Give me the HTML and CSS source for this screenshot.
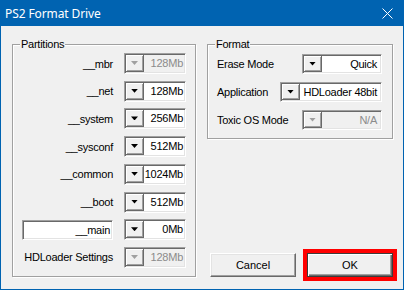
FILE: index.html
```html
<!DOCTYPE html>
<html lang="en">
<head>
    <meta charset="UTF-8">
    <title>PS2 Format Drive</title>
    <link rel="stylesheet" href="styles.css">
</head>
<body>
    <div class="window">
        <div class="titlebar">
            <span class="title">PS2 Format Drive</span>
            <svg class="close" width="11" height="11" viewBox="0 0 11 11">
                <path d="M0.5 0.5 L10.5 10.5 M10.5 0.5 L0.5 10.5" stroke="#fff" stroke-width="1" fill="none"/>
            </svg>
        </div>
        <div class="client">
            <!-- Partitions -->
            <fieldset class="group partitions">
                <legend>Partitions</legend>
                <div class="part-rows">
                    <div class="prow">
                        <span class="plabel">__mbr</span>
                        <div class="combo disabled"><span class="combo-btn"></span><span class="combo-value">128Mb</span></div>
                    </div>
                    <div class="prow">
                        <span class="plabel">__net</span>
                        <div class="combo"><span class="combo-btn"></span><span class="combo-value">128Mb</span></div>
                    </div>
                    <div class="prow">
                        <span class="plabel">__system</span>
                        <div class="combo"><span class="combo-btn"></span><span class="combo-value">256Mb</span></div>
                    </div>
                    <div class="prow">
                        <span class="plabel">__sysconf</span>
                        <div class="combo"><span class="combo-btn"></span><span class="combo-value">512Mb</span></div>
                    </div>
                    <div class="prow">
                        <span class="plabel">__common</span>
                        <div class="combo"><span class="combo-btn"></span><span class="combo-value">1024Mb</span></div>
                    </div>
                    <div class="prow">
                        <span class="plabel">__boot</span>
                        <div class="combo"><span class="combo-btn"></span><span class="combo-value">512Mb</span></div>
                    </div>
                    <div class="prow">
                        <div class="field">__main</div>
                        <div class="combo"><span class="combo-btn"></span><span class="combo-value">0Mb</span></div>
                    </div>
                    <div class="prow">
                        <span class="plabel">HDLoader Settings</span>
                        <div class="combo disabled"><span class="combo-btn"></span><span class="combo-value">128Mb</span></div>
                    </div>
                </div>
            </fieldset>

            <div class="side">
                <!-- Format -->
                <fieldset class="group format">
                    <legend>Format</legend>
                    <div class="format-rows">
                        <div class="frow">
                            <span>Erase Mode</span>
                            <div class="combo combo-short"><span class="combo-btn"></span><span class="combo-value">Quick</span></div>
                        </div>
                        <div class="frow">
                            <span>Application</span>
                            <div class="combo combo-long"><span class="combo-btn"></span><span class="combo-value">HDLoader 48bit</span></div>
                        </div>
                        <div class="frow">
                            <span>Toxic OS Mode</span>
                            <div class="combo combo-short disabled"><span class="combo-btn"></span><span class="combo-value">N/A</span></div>
                        </div>
                    </div>
                </fieldset>

                <div class="buttons">
                    <button class="btn">Cancel</button>
                    <button class="btn btn-default">OK</button>
                </div>
            </div>
        </div>
    </div>
</body>
</html>
```

FILE: styles.css
```css
body {
    margin: 0;
    font-family: "Liberation Sans", Arial, sans-serif;
    font-size: 11px;
    letter-spacing: -0.25px;
    color: #000;
}

.window {
    width: 404px;
    height: 290px;
    box-sizing: border-box;
    background: #0063b1;
    padding: 0 1px 1px;
    display: flex;
    flex-direction: column;
}

.titlebar {
    height: 26px;
    display: flex;
    align-items: center;
    justify-content: space-between;
    padding: 0 10px 0 4px;
    color: #fff;
    font-family: "Noto Sans", sans-serif;
    font-size: 12px;
    letter-spacing: -0.1px;
}

.client {
    flex: 1;
    display: flex;
    gap: 11px;
    padding: 12px 10px 12px 11px;
    background: #f0f0f0;
}

/* group box, etched line */
.group {
    margin: 0;
    min-width: 0;
    border: 1px solid #a0a0a0;
    box-shadow: inset 1px 1px #fff, 1px 1px #fff;
}

.group legend {
    margin-left: -2px;
    padding: 0 1px;
    line-height: 13px;
    background: #f0f0f0;
}

.partitions {
    width: 184px;
    box-sizing: border-box;
    padding: 2px 9px 8px;
}

.part-rows {
    height: 215px;
    display: flex;
    flex-direction: column;
    justify-content: space-between;
}

.prow {
    display: flex;
    align-items: center;
    gap: 11px;
    height: 21px;
}

.plabel {
    width: 91px;
    text-align: right;
    white-space: nowrap;
}

.field {
    width: 91px;
    height: 20px;
    box-sizing: border-box;
    border: 1px solid;
    border-color: #a0a0a0 #fff #fff #a0a0a0;
    box-shadow: inset 1px 1px #696969, inset -1px -1px #e3e3e3;
    background: #fff;
    text-align: right;
    padding-right: 2px;
    line-height: 18px;
}

/* combobox: button on the left, value on the right */
.combo {
    width: 62px;
    height: 21px;
    box-sizing: border-box;
    display: flex;
    padding: 1px;
    border: 1px solid;
    border-color: #a0a0a0 #fff #fff #a0a0a0;
    box-shadow: inset 1px 1px #696969, inset -1px -1px #e3e3e3;
    background: #fff;
}

.combo-btn {
    width: 17px;
    display: flex;
    align-items: center;
    justify-content: center;
    background: #f0f0f0;
    border-right: 1px solid #696969;
    border-bottom: 1px solid #696969;
    box-shadow: inset 1px 1px #fff, inset -1px -1px #a0a0a0;
}

.combo-btn::after {
    content: "";
    width: 7px;
    height: 4px;
    background: #000;
    clip-path: polygon(0 0, 100% 0, 50% 100%);
}

.combo-value {
    flex: 1;
    text-align: right;
    padding-right: 1px;
    white-space: nowrap;
    line-height: 17px;
}

.combo.disabled {
    background: #f0f0f0;
    color: #8b8b8b;
}

.combo.disabled .combo-btn::after {
    background: #a0a0a0;
}

.side {
    width: 186px;
    display: flex;
    flex-direction: column;
}

.format {
    padding: 3px 10px 8px 9px;
}

.format-rows {
    display: flex;
    flex-direction: column;
    gap: 8px;
}

.frow {
    display: flex;
    align-items: center;
    justify-content: space-between;
    height: 20px;
}

.frow .combo {
    height: 20px;
}

.combo-short {
    width: 80px;
}

.combo-long {
    width: 102px;
}

.combo-long .combo-value {
    padding-right: 2px;
}

.format .combo-value {
    padding-right: 3px;
    line-height: 16px;
}

.buttons {
    margin-top: auto;
    display: flex;
    gap: 11px;
    padding-left: 3px;
}

.btn {
    width: 86px;
    height: 24px;
    padding: 0;
    font: inherit;
    color: #000;
    background: #f0f0f0;
    border: 1px solid;
    border-color: #fff #696969 #696969 #fff;
    box-shadow: inset -1px -1px #a0a0a0, inset 1px 1px #e3e3e3;
}

.btn-default {
    border-color: #3c3c3c;
    box-shadow: inset 1px 1px #fff, inset -1px -1px #696969, inset -2px -2px #a0a0a0;
    outline: 4px solid #ff0000;
}
```
